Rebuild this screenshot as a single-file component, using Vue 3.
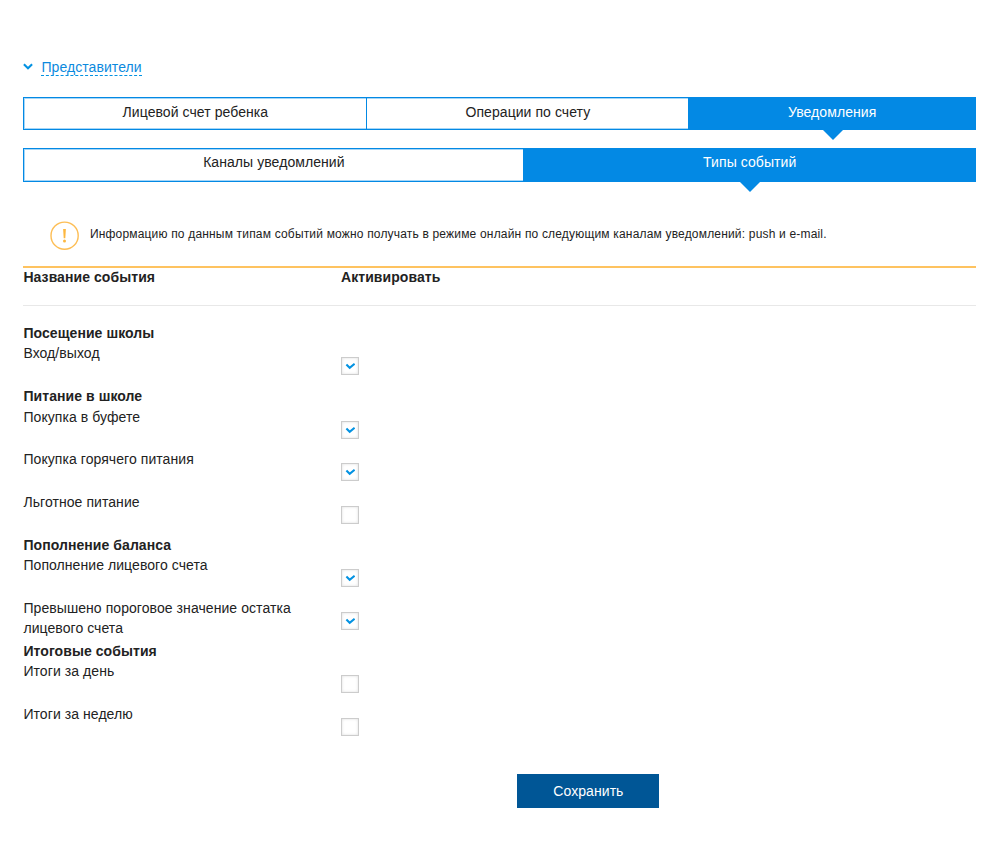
<template>
  <div class="page">
    <div class="toggle">
      <svg class="toggle-arrow" width="10" height="8" viewBox="0 0 10 8">
        <path d="M0.9 1.3 L5 5.2 L9.1 1.3" fill="none" stroke="#0392e2" stroke-width="2.1" />
      </svg>
      <a class="toggle-link">Представители</a>
    </div>

    <!-- основные вкладки -->
    <div class="tabs tabs-main">
      <div
        v-for="t in mainTabs"
        :key="t"
        class="tab"
        :class="{ active: t === mainTab }"
        @click="mainTab = t"
      >
        <span>{{ t }}</span>
      </div>
    </div>

    <!-- вложенные вкладки -->
    <div class="tabs tabs-sub">
      <div
        v-for="t in subTabs"
        :key="t"
        class="tab"
        :class="{ active: t === subTab }"
        @click="subTab = t"
      >
        <span>{{ t }}</span>
      </div>
    </div>

    <div class="info">
      <svg class="info-icon" width="30" height="30" viewBox="0 0 30 30">
        <circle cx="14.6" cy="14.7" r="13.6" fill="none" stroke="#fdbe55" stroke-width="1.4" />
        <path d="M13.1 8 H15.9 L15.3 17.2 H13.7 Z" fill="#fdb73f" />
        <circle cx="14.5" cy="20" r="1.5" fill="#fdb73f" />
      </svg>
      <span class="info-text">Информацию по данным типам событий можно получать в режиме онлайн по следующим каналам уведомлений: push и e-mail.</span>
    </div>

    <div class="head">
      <div>Название события</div>
      <div>Активировать</div>
    </div>

    <div class="events">
      <template v-for="g in groups" :key="g.title">
        <div class="group-title"><span>{{ g.title }}</span></div>
        <div v-for="e in g.items" :key="e.name" class="event">
          <div class="event-name">{{ e.name }}</div>
          <div class="checkbox" @click="e.on = !e.on">
            <svg v-if="e.on" width="10" height="8" viewBox="0 0 10 8">
              <path d="M1.4 2.6 L4.7 5.8 L9.6 1.8" fill="none" stroke="#0392e2" stroke-width="2.1" />
            </svg>
          </div>
        </div>
      </template>
    </div>

    <button class="save">Сохранить</button>
  </div>
</template>

<script setup>
import { ref, reactive } from 'vue'

const mainTabs = ['Лицевой счет ребенка', 'Операции по счету', 'Уведомления']
const subTabs = ['Каналы уведомлений', 'Типы событий']
const mainTab = ref('Уведомления')
const subTab = ref('Типы событий')

const groups = reactive([
  {
    title: 'Посещение школы',
    items: [{ name: 'Вход/выход', on: true }]
  },
  {
    title: 'Питание в школе',
    items: [
      { name: 'Покупка в буфете', on: true },
      { name: 'Покупка горячего питания', on: true },
      { name: 'Льготное питание', on: false }
    ]
  },
  {
    title: 'Пополнение баланса',
    items: [
      { name: 'Пополнение лицевого счета', on: true },
      { name: 'Превышено пороговое значение остатка лицевого счета', on: true }
    ]
  },
  {
    title: 'Итоговые события',
    items: [
      { name: 'Итоги за день', on: false },
      { name: 'Итоги за неделю', on: false }
    ]
  }
])
</script>

<style>
body {
  background: #fff;
}
</style>

<style scoped>
.page {
  box-sizing: border-box;
  width: 1000px;
  height: 850px;
  padding: 57px 24px 0 23.4px;
  overflow: hidden;
  background: #fff;
  color: #222;
  font-family: "Liberation Sans", Arial, sans-serif;
  font-size: 14px;
  line-height: 20px;
  letter-spacing: 0.07px;
}

.toggle {
  display: flex;
  height: 40px;
}

.toggle-arrow {
  margin: 6px 8px 0 0;
}

.toggle-link {
  height: 18px;
  border-bottom: 1px dashed #0392e2;
  color: #0c8ade;
  cursor: pointer;
}

.tabs {
  display: grid;
  box-sizing: border-box;
  border: 1px solid #0389e4;
  box-shadow: inset 0 0 0 1px #a6d6f7;
}

.tabs-main {
  grid-template-columns: 342px 322px 1fr;
  height: 33px;
}

.tabs-sub {
  grid-template-columns: 499px 1fr;
  height: 34px;
  margin-top: 18px;
}

.tab {
  position: relative;
  padding-top: 4px;
  text-align: center;
  cursor: pointer;
}

.tabs-sub .tab {
  padding-top: 3.4px;
}

.tab + .tab {
  border-left: 1px solid #0389e4;
}

.tab.active {
  background: #0389e4;
  color: #fff;
}

/* указатель под активной вкладкой */
.tab.active::after {
  content: "";
  position: absolute;
  left: 50%;
  top: 100%;
  margin-left: -10.5px;
  border: 11px solid transparent;
  border-top-color: #0389e4;
  border-bottom: 0;
}

.info {
  display: flex;
  box-sizing: border-box;
  height: 86px;
  padding: 39px 0 0 27px;
  border-bottom: 2px solid #fec360;
}

.info-text {
  margin: 3px 0 0 9.5px;
  font-size: 12px;
  letter-spacing: 0.18px;
  white-space: nowrap;
}

.head {
  display: grid;
  grid-template-columns: 317.6px 1fr;
  box-sizing: border-box;
  height: 38px;
  border-bottom: 1px solid #e8e8e8;
  font-weight: bold;
  line-height: 18px;
}

.events {
  padding-top: 17px;
}

.group-title {
  box-sizing: border-box;
  height: 21px;
  padding-top: 0.9px;
  font-weight: bold;
  line-height: 18px;
}

.event {
  display: grid;
  grid-template-columns: 317.6px 18px;
  height: 42.5px;
}

.event-name {
  width: 290px;
  margin-top: -1px;
}

.checkbox {
  display: flex;
  align-items: center;
  justify-content: center;
  box-sizing: border-box;
  width: 18px;
  height: 18px;
  margin-top: 13px;
  border: 1px solid #ccc;
  background: #fff;
  box-shadow: inset 0 0 3px #ddd;
  cursor: pointer;
}

.save {
  display: block;
  width: 142px;
  height: 34px;
  margin: 27px 0 0 494px;
  padding: 0;
  border: 0;
  background: #005696;
  color: #fff;
  font: inherit;
  letter-spacing: inherit;
  cursor: pointer;
}
</style>
